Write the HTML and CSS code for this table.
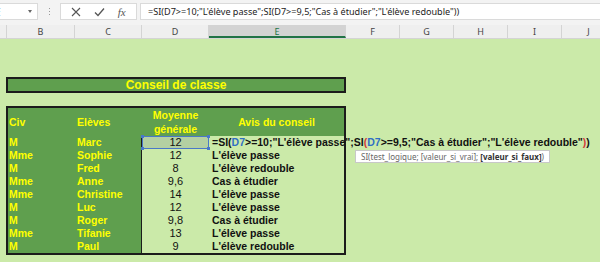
FILE: index.html
```html
<!DOCTYPE html>
<html lang="fr">
<head>
    <meta charset="UTF-8">
    <title>Conseil de classe</title>
    <link rel="stylesheet" href="styles.css">
</head>
<body>
    <div class="toolbar">
        <div class="namebox"><span class="ref">E</span><span class="arrow"></span></div>
        <div class="grip"><i></i><i></i><i></i></div>
        <div class="fxbox">
            <svg class="ico" width="10" height="10" viewBox="0 0 10 10"><path d="M1 1 L9 9 M9 1 L1 9" stroke="#555" stroke-width="1.1" fill="none"/></svg>
            <svg class="ico" width="11" height="10" viewBox="0 0 11 10"><path d="M1 5.5 L4 8.5 L10 1.5" stroke="#555" stroke-width="1.3" fill="none"/></svg>
            <span class="fx">fx</span>
        </div>
        <div class="formula">=SI(D7&gt;=10;"L'élève passe";SI(D7&gt;=9,5;"Cas à étudier";"L'élève redouble"))</div>
    </div>

    <div class="colheads">
        <div class="corner"></div>
        <div class="col w-b">B</div>
        <div class="col w-c">C</div>
        <div class="col w-d">D</div>
        <div class="col w-e active">E</div>
        <div class="col w-s">F</div>
        <div class="col w-s">G</div>
        <div class="col w-s">H</div>
        <div class="col w-s">I</div>
        <div class="col w-s">J</div>
    </div>

    <div class="sheet">
        <div class="titre">Conseil de classe</div>
        <table class="conseil">
            <colgroup>
                <col class="c-civ"><col class="c-nom"><col class="c-moy"><col class="c-avis">
            </colgroup>
            <thead>
                <tr>
                    <th class="civ">Civ</th>
                    <th class="nom">Elèves</th>
                    <th class="moy">Moyenne<br>générale</th>
                    <th class="avis">Avis du conseil</th>
                </tr>
            </thead>
            <tbody>
                <tr>
                    <td class="civ">M</td><td class="nom">Marc</td>
                    <td class="moy sel"><div class="cellsel">12<span class="h tl"></span><span class="h tr"></span><span class="h bl"></span><span class="h br"></span></div></td>
                    <td class="avis edit">=SI(<span class="r1">D7</span>&gt;=10;"L'élève passe";SI<span class="p2">(</span><span class="r1">D7</span>&gt;=9,5;"Cas à étudier";"L'élève redouble"<span class="p2">)</span>)</td>
                </tr>
                <tr><td class="civ">Mme</td><td class="nom">Sophie</td><td class="moy">12</td><td class="avis">L'élève passe</td></tr>
                <tr><td class="civ">M</td><td class="nom">Fred</td><td class="moy">8</td><td class="avis">L'élève redouble</td></tr>
                <tr><td class="civ">Mme</td><td class="nom">Anne</td><td class="moy">9,6</td><td class="avis">Cas à étudier</td></tr>
                <tr><td class="civ">Mme</td><td class="nom">Christine</td><td class="moy">14</td><td class="avis">L'élève passe</td></tr>
                <tr><td class="civ">M</td><td class="nom">Luc</td><td class="moy">12</td><td class="avis">L'élève passe</td></tr>
                <tr><td class="civ">M</td><td class="nom">Roger</td><td class="moy">9,8</td><td class="avis">Cas à étudier</td></tr>
                <tr><td class="civ">Mme</td><td class="nom">Tifanie</td><td class="moy">13</td><td class="avis">L'élève passe</td></tr>
                <tr><td class="civ">M</td><td class="nom">Paul</td><td class="moy">9</td><td class="avis">L'élève redouble</td></tr>
            </tbody>
        </table>
        <div class="infobulle">SI(test_logique; [valeur_si_vrai]; <b>[valeur_si_faux]</b>)</div>
    </div>
</body>
</html>
```

FILE: styles.css
```css
body {
    margin: 0;
    width: 600px;
    height: 262px;
    overflow: hidden;
    background: #cbeaa9;
    font-family: "Liberation Sans", Arial, sans-serif;
}

/* barre de formule */
.toolbar {
    height: 25px;
    box-sizing: border-box;
    padding-top: 3px;
    background: #f3f3f3;
    display: flex;
    align-items: flex-start;
    overflow: hidden;
}
.namebox {
    width: 38px;
    height: 17px;
    box-sizing: border-box;
    background: #fff;
    border: 1px solid #dadada;
    border-left: none;
    display: flex;
    align-items: center;
    justify-content: space-between;
    font: 10px "Noto Sans", sans-serif;
    color: #333;
}
.namebox .ref { margin-left: -5px; }
.namebox .arrow {
    margin-right: 5px;
    border-left: 2.5px solid transparent;
    border-right: 2.5px solid transparent;
    border-top: 3px solid #666;
}
.grip {
    width: 22px;
    height: 17px;
    display: flex;
    flex-direction: column;
    align-items: center;
    justify-content: center;
    gap: 2px;
}
.grip i {
    width: 1px;
    height: 1px;
    background: #999;
}
.fxbox {
    width: 77px;
    height: 17px;
    box-sizing: border-box;
    background: #fff;
    border: 1px solid #dadada;
    display: flex;
    align-items: center;
    justify-content: space-around;
    padding: 0 4px;
}
.fx {
    font: italic 11px "Liberation Serif", serif;
    color: #555;
}
.formula {
    flex: 1;
    height: 17px;
    box-sizing: border-box;
    margin-left: 3px;
    background: #fff;
    border: 1px solid #dadada;
    border-right: none;
    padding-left: 7px;
    font: 9.1px/15px "Noto Sans", sans-serif;
    color: #222;
    white-space: nowrap;
}

/* en-têtes de colonnes */
.colheads {
    height: 13px;
    background: #efefef;
    display: flex;
    border-bottom: 1px solid #d4d4d4;
    overflow: hidden;
}
.corner { width: 7px; flex: none; border-right: 1px solid #d4d4d4; box-sizing: border-box; }
.col {
    flex: none;
    box-sizing: border-box;
    border-right: 1px solid #d4d4d4;
    text-align: center;
    font: 9px/13px "Noto Sans", sans-serif;
    color: #444;
}
.w-b { width: 68px; }
.w-c { width: 67px; }
.w-d { width: 67px; }
.w-e { width: 137px; }
.w-s { width: 54px; }
.col.active {
    background: #d3d3d3;
    border-bottom: 2px solid #217346;
    color: #217346;
}

/* feuille */
.sheet {
    position: relative;
    padding: 38px 0 0 6px;
}
.titre {
    width: 340px;
    height: 16px;
    box-sizing: border-box;
    border: 2px solid #1c1c1c;
    background: #5f9f4e;
    color: #ffff00;
    font-weight: bold;
    font-size: 12px;
    line-height: 12px;
    text-align: center;
}
.conseil {
    margin-top: 13px;
    width: 340px;
    table-layout: fixed;
    border-collapse: separate;
    border-spacing: 0;
    border: 2px solid #1c1c1c;
    font-size: 10.5px;
    font-weight: bold;
}
.c-civ, .c-nom, .c-moy { width: 67px; }
.c-avis { width: 135px; }
.conseil th, .conseil td {
    padding: 0;
    white-space: nowrap;
}
.conseil thead th {
    height: 25px;
    background: #5f9f4e;
    color: #ffff00;
    line-height: 14px;
}
.conseil td { height: 13px; line-height: 13px; }
th.civ, td.civ { text-align: left; padding-left: 1px; }
th.nom, td.nom { text-align: left; padding-left: 2px; }
th.moy { text-align: center; }
th.avis { text-align: center; }
td.civ, td.nom {
    background: #5f9f4e;
    color: #ffff00;
}
td.nom { border-right: 1px solid #1c1c1c; }
td.moy {
    text-align: center;
    font-weight: normal;
    font-size: 11px;
    color: #111;
}
td.avis {
    padding-left: 3px;
    color: #111;
}
td.edit { overflow: visible; }
.r1 { color: #2f6fc4; }
.p2 { color: #d63a3a; }

/* cellule active D7 */
td.sel { padding: 0; }
.cellsel {
    position: relative;
    height: 13px;
    box-sizing: border-box;
    border: 1px solid #4a78c8;
    background: #b4d0a2;
    line-height: 11px;
}
.h {
    position: absolute;
    width: 3px;
    height: 3px;
    background: #4a78c8;
}
.tl { left: -2px; top: -2px; }
.tr { right: -2px; top: -2px; }
.bl { left: -2px; bottom: -2px; }
.br { right: -2px; bottom: -2px; }

/* info-bulle de la fonction */
.infobulle {
    position: absolute;
    left: 355px;
    top: 111px;
    height: 13px;
    box-sizing: border-box;
    padding: 0 5px;
    background: #fff;
    border: 1px solid #c8c8c8;
    font: 8px/11px "Noto Sans", sans-serif;
    color: #666;
    white-space: nowrap;
}
.infobulle b { color: #333; }
```
